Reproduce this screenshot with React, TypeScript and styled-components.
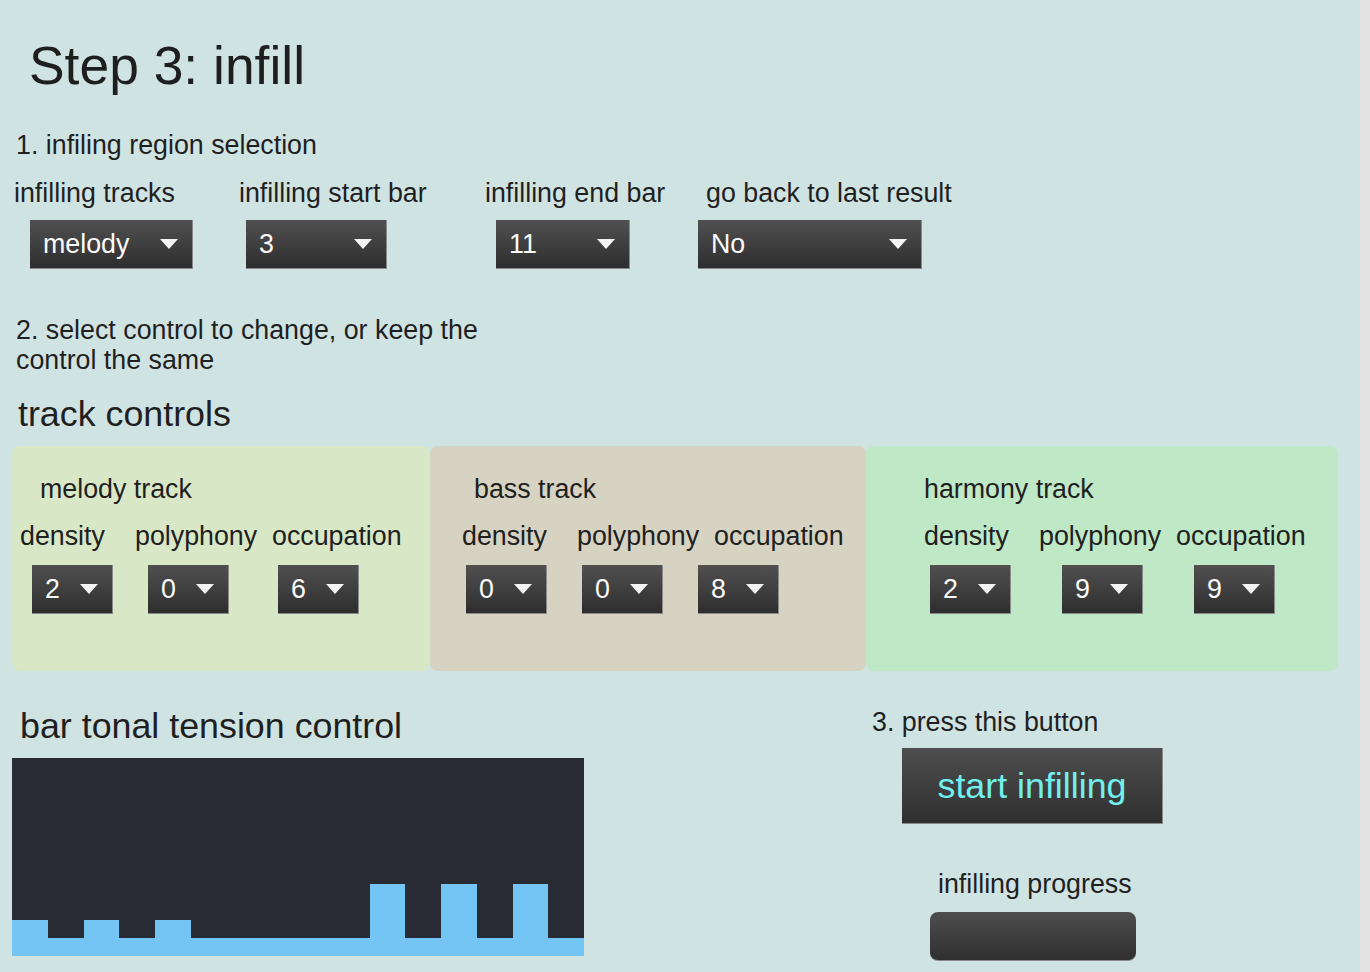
import React from "react";
import styled, { createGlobalStyle } from "styled-components";

const Global = createGlobalStyle`
  html, body { margin: 0; padding: 0; background: #e3e3e3; }
  body { font-family: "Liberation Sans", Arial, sans-serif; color: #202020; }
  * { box-sizing: border-box; }
`;

const Page = styled.div`
  width: 1360px;
  height: 972px;
  background: #cfe3e3;
  display: flex;
  flex-direction: column;
  overflow: hidden;
`;

const Title = styled.h1`
  margin: 39px 0 0 29px;
  font-size: 53.4px;
  line-height: 1;
  font-weight: 400;
  color: #1e1e1e;
`;

const Text = styled.div<{ $mt?: number; $ml?: number; $size?: number; $lh?: string; $maxw?: number }>`
  margin-top: ${(p) => p.$mt ?? 0}px;
  margin-left: ${(p) => p.$ml ?? 0}px;
  font-size: ${(p) => p.$size ?? 26.8}px;
  line-height: ${(p) => p.$lh ?? "1"};
  max-width: ${(p) => (p.$maxw ? `${p.$maxw}px` : "none")};
  white-space: ${(p) => (p.$maxw ? "normal" : "nowrap")};
  color: #1f1f1f;
`;

const FieldRow = styled.div`
  display: flex;
  margin-top: 21.2px;
  padding-left: 14px;
`;

const Field = styled.div<{ $w?: number }>`
  display: flex;
  flex-direction: column;
  width: ${(p) => (p.$w ? `${p.$w}px` : "auto")};
`;

const SelectBox = styled.div<{ $w: number; $ml?: number; $mt?: number }>`
  width: ${(p) => p.$w}px;
  height: 49px;
  margin-left: ${(p) => p.$ml ?? 0}px;
  margin-top: ${(p) => p.$mt ?? 0}px;
  background: linear-gradient(#505050, #2e2e2e);
  border-right: 1px solid #8a8a8a;
  border-bottom: 1px solid #8a8a8a;
  display: flex;
  align-items: center;
  justify-content: space-between;
  padding: 1px 14px 0 13px;
  color: #fafafa;
  font-size: 26.8px;
  line-height: 1;
  flex-shrink: 0;
`;

const Arrow = styled.span`
  width: 0;
  height: 0;
  border-left: 9.5px solid transparent;
  border-right: 9.5px solid transparent;
  border-top: 10px solid #f4f4f4;
`;

const Select = ({ value, w, ml, mt }: { value: string; w: number; ml?: number; mt?: number }) => (
  <SelectBox $w={w} $ml={ml} $mt={mt}>
    <span>{value}</span>
    <Arrow />
  </SelectBox>
);

const Panels = styled.div`
  display: flex;
  margin: 12.9px 0 0 12px;
  height: 225px;
`;

const Panel = styled.div<{ $bg: string; $w: number }>`
  width: ${(p) => p.$w}px;
  height: 100%;
  background: ${(p) => p.$bg};
  border-radius: 8px;
  padding-top: 29.5px;
  display: flex;
  flex-direction: column;
`;

const LabelRow = styled.div<{ $pl: number }>`
  display: grid;
  grid-template-columns: 115px 137px auto;
  padding-left: ${(p) => p.$pl}px;
  margin-top: 21px;
  font-size: 26.8px;
  line-height: 1;
  white-space: nowrap;
`;

const SelectRow = styled.div`
  display: flex;
  margin-top: 14.5px;
`;

const Bottom = styled.div`
  display: flex;
  margin-top: 37px;
`;

const TensionCol = styled.div`
  display: flex;
  flex-direction: column;
  margin-left: 12px;
  width: 572px;
`;

const Chart = styled.div`
  margin-top: 13.4px;
  height: 198px;
  background: #282a34;
  display: flex;
  align-items: flex-end;
`;

const Bar = styled.div`
  flex: 1;
  background: #74c5f3;
`;

const ActionCol = styled.div`
  display: flex;
  flex-direction: column;
  margin-left: 288px;
`;

const StartButton = styled.button`
  margin: 12.4px 0 0 30px;
  width: 261px;
  height: 76px;
  background: linear-gradient(#4e4e4e, #2f2f2f);
  border: none;
  border-right: 1px solid #8a8a8a;
  border-bottom: 1px solid #8a8a8a;
  color: #72f0ee;
  font-family: "Liberation Sans", Arial, sans-serif;
  font-size: 35.8px;
  line-height: 1;
  padding: 2px 0 0;
  display: flex;
  align-items: center;
  justify-content: center;
`;

const Progress = styled.div`
  margin: 14px 0 0 58px;
  width: 206px;
  height: 49px;
  border-radius: 8px;
  background: linear-gradient(#4e4e4e, #2f2f2f);
  border-bottom: 1px solid #8a8a8a;
`;

type Track = {
  name: string;
  bg: string;
  w: number;
  titleX: number;
  labelX: number;
  selects: { v: string; ml: number }[];
};

const tracks: Track[] = [
  {
    name: "melody track",
    bg: "#d8e8c6",
    w: 418,
    titleX: 28,
    labelX: 8,
    selects: [
      { v: "2", ml: 20 },
      { v: "0", ml: 35 },
      { v: "6", ml: 49 },
    ],
  },
  {
    name: "bass track",
    bg: "#d7d3c2",
    w: 436,
    titleX: 44,
    labelX: 32,
    selects: [
      { v: "0", ml: 36 },
      { v: "0", ml: 35 },
      { v: "8", ml: 35 },
    ],
  },
  {
    name: "harmony track",
    bg: "#bfe8c6",
    w: 472,
    titleX: 58,
    labelX: 58,
    selects: [
      { v: "2", ml: 64 },
      { v: "9", ml: 51 },
      { v: "9", ml: 51 },
    ],
  },
];

const tension = [36, 18, 36, 18, 36, 18, 18, 18, 18, 18, 72, 18, 72, 18, 72, 18];

export default function App() {
  return (
    <>
      <Global />
      <Page>
        <Title>Step 3: infill</Title>
        <Text $mt={39.6} $ml={16}>1. infiling region selection</Text>
        <FieldRow>
          <Field $w={225}>
            <Text>infilling tracks</Text>
            <Select value="melody" w={163} ml={16} mt={13.2} />
          </Field>
          <Field $w={246}>
            <Text>infilling start bar</Text>
            <Select value="3" w={141} ml={7} mt={13.2} />
          </Field>
          <Field $w={213}>
            <Text>infilling end bar</Text>
            <Select value="11" w={134} ml={11} mt={13.2} />
          </Field>
          <Field>
            <Text $ml={8}>go back to last result</Text>
            <Select value="No" w={224} mt={13.2} />
          </Field>
        </FieldRow>
        <Text $mt={45.8} $ml={16} $lh="30px" $maxw={500}>
          2. select control to change, or keep the control the same
        </Text>
        <Text $mt={22.7} $ml={18} $size={35.8}>track controls</Text>
        <Panels>
          {tracks.map((t) => (
            <Panel key={t.name} $bg={t.bg} $w={t.w}>
              <Text $ml={t.titleX}>{t.name}</Text>
              <LabelRow $pl={t.labelX}>
                <span>density</span>
                <span>polyphony</span>
                <span>occupation</span>
              </LabelRow>
              <SelectRow>
                {t.selects.map((s, i) => (
                  <Select key={i} value={s.v} w={81} ml={s.ml} />
                ))}
              </SelectRow>
            </Panel>
          ))}
        </Panels>
        <Bottom>
          <TensionCol>
            <Text $mt={1} $ml={8} $size={35.8}>bar tonal tension control</Text>
            <Chart>
              {tension.map((h, i) => (
                <Bar key={i} style={{ height: `${h}px` }} />
              ))}
            </Chart>
          </TensionCol>
          <ActionCol>
            <Text $mt={1}>3. press this button</Text>
            <StartButton>start infilling</StartButton>
            <Text $mt={47} $ml={66}>infilling progress</Text>
            <Progress />
          </ActionCol>
        </Bottom>
      </Page>
    </>
  );
}
